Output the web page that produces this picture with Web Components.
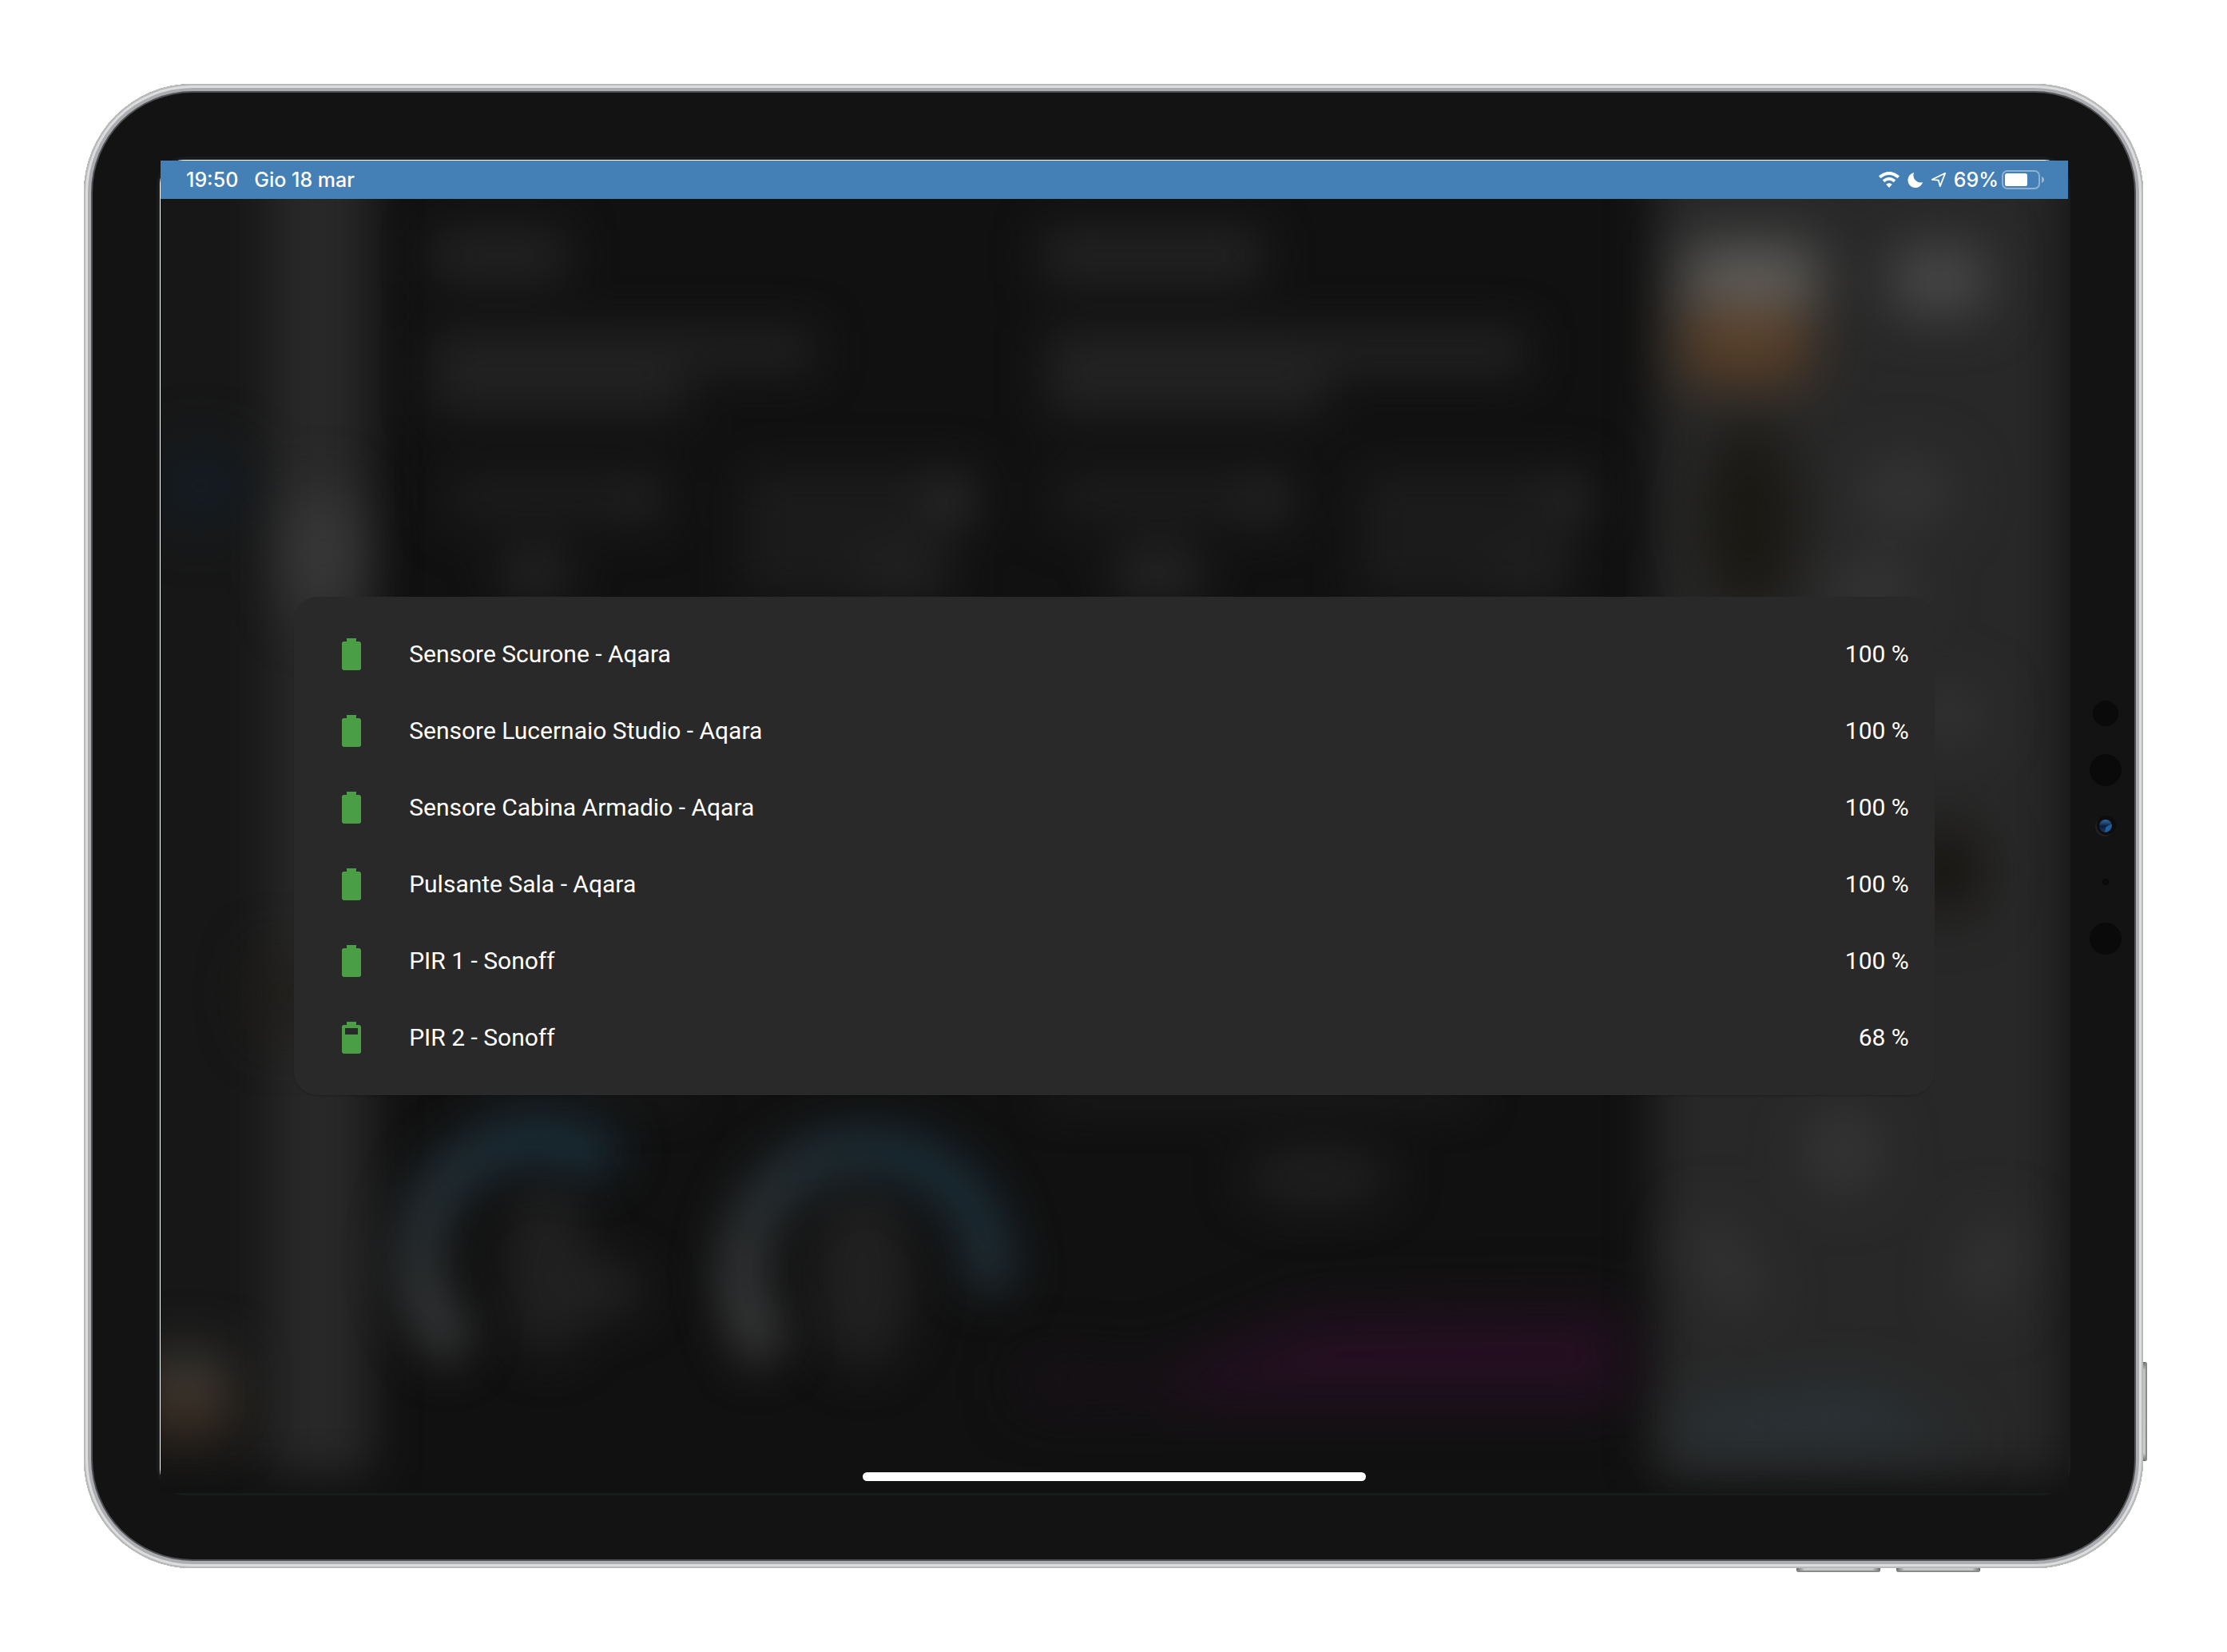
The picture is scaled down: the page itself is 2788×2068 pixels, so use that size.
<!DOCTYPE html>
<html lang="it">
<head>
<meta charset="utf-8">
<title>Batterie sensori</title>
<style>
  html, body { margin: 0; background: #fff; }
</style>
</head>
<body>
<tablet-frame>
  <status-bar slot="status" time="19:50" date="Gio 18 mar" charge="69"></status-bar>
  <dashboard-backdrop slot="backdrop"></dashboard-backdrop>
  <battery-card>
    <battery-row level="100">Sensore Scurone - Aqara</battery-row>
    <battery-row level="100">Sensore Lucernaio Studio - Aqara</battery-row>
    <battery-row level="100">Sensore Cabina Armadio - Aqara</battery-row>
    <battery-row level="100">Pulsante Sala - Aqara</battery-row>
    <battery-row level="100">PIR 1 - Sonoff</battery-row>
    <battery-row level="68">PIR 2 - Sonoff</battery-row>
  </battery-card>
</tablet-frame>

<template id="tablet-frame">
  <style>
    :host { display: flex; box-sizing: border-box; min-height: 100vh; padding: 105px; }
    .body {
      position: relative; flex: 1; display: flex; box-sizing: border-box; padding: 91px;
      border-radius: 136px; background: #131313;
      box-shadow: inset 0 0 0 2px #b9bab8, inset 0 0 0 5px #dcdddf, inset 0 0 0 9px #acadb1, inset 0 0 0 11px #505153;
    }
    .glass { flex: 1; display: flex; padding: 4px 3px 3px 4px; border-radius: 36px; background: #191c1c; }
    .edge { flex: 1; display: flex; padding: 1px 0 0 1px; border-radius: 30px; background: #fff; }
    .screen { flex: 1; display: flex; flex-direction: column; min-width: 0; background: #111; }
    .view { position: relative; flex: 1; display: flex; align-items: center; justify-content: center; }
    ::slotted([slot="backdrop"]) { position: absolute; inset: 0; }
    .home { position: absolute; bottom: 15px; left: 50%; width: 630px; height: 11px; margin-left: -315px; border-radius: 6px; background: #fff; }
    .sensors { position: absolute; right: 27px; top: 50%; margin-top: -161px; }
    .key {
      position: absolute; box-sizing: border-box; border: 0 solid #8a8b8b;
    }
    .key.power { left: 100%; bottom: 134px; width: 5px; height: 124px; border-right-width: 2px; border-radius: 0 2px 2px 0;
      background: linear-gradient(#6a6b6b, #bfc0c0 10px, #c9caca 114px, #6a6b6b); }
    .key.vol { top: 100%; width: 105px; height: 5px; border-bottom-width: 2px; border-radius: 0 0 2px 2px;
      background: linear-gradient(90deg, #6a6b6b, #c9caca 10px, #c9caca 95px, #6a6b6b); }
    .up { right: 329px; }
    .down { right: 204px; }
  </style>
  <div class="body">
    <div class="glass"><div class="edge"><main class="screen">
      <slot name="status"></slot>
      <div class="view">
        <slot name="backdrop"></slot>
        <slot></slot>
        <div class="home"></div>
      </div>
    </main></div></div>
    <svg class="sensors" width="40" height="322" viewBox="0 0 40 322" aria-hidden="true">
      <defs><linearGradient id="lens" x1="0" y1="0" x2="0" y2="1"><stop offset="0" stop-color="#2f6aa3"/><stop offset=".35" stop-color="#1b3a66"/><stop offset=".5" stop-color="#0e1c3a"/><stop offset="1" stop-color="#163a68"/></linearGradient></defs>
      <g fill="#0a0a0a"><circle cx="20" cy="20" r="16"/><circle cx="20" cy="91" r="20"/><circle cx="20" cy="231" r="4"/><circle cx="20" cy="302" r="20"/></g>
      <circle cx="19" cy="162" r="12" fill="#202020"/><circle cx="21" cy="160" r="12" fill="#0d0d0d"/>
      <circle cx="20" cy="161" r="8" fill="url(#lens)"/>
      <path d="M20 163q4-4 8-4q0 8-9 10z" fill="#1f5f9b"/>
    </svg>
    <div class="key power"></div><div class="key vol up"></div><div class="key vol down"></div>
  </div>
</template>

<template id="status-bar">
  <style>
    :host { display: flex; align-items: center; justify-content: space-between; height: 48px; padding: 0 29px 0 32px;
      background: #447fb5; color: #fff; font: 500 25px/32px Inter, "Liberation Sans", sans-serif; }
    .group { display: flex; align-items: center; }
    .left { gap: 20px; }
    .right { gap: 9px; }
    .charge { display: flex; align-items: center; gap: 4px; }
    svg { display: block; }
  </style>
  <div class="group left"><time id="time"></time><span id="date"></span></div>
  <div class="group right">
    <svg width="28" height="20" viewBox="0 0 28 20" role="img" aria-label="Wi-Fi">
      <path d="M2.2 6.8Q14-3 25.8 6.8" fill="none" stroke="#fff" stroke-width="4"/>
      <path d="M7 11.8Q14 5.8 21 11.8" fill="none" stroke="#fff" stroke-width="3.8"/>
      <path d="M10.2 15.8Q14 12.6 17.8 15.8L14 19.9z" fill="#fff"/>
    </svg>
    <svg width="20" height="20" viewBox="0 0 20 20" role="img" aria-label="Non disturbare"><path d="M8.2 1A9.6 9.6 0 1 0 19.2 13.1A9 9 0 0 1 8.2 1z" fill="#fff"/></svg>
    <svg width="20" height="20" viewBox="0 0 20 20" role="img" aria-label="Posizione"><path d="M18.2 1.8L1.8 9.8L9.8 10.6L11.8 18.2z" fill="none" stroke="#fff" stroke-width="1.8" stroke-linejoin="round"/></svg>
    <div class="charge">
      <span id="charge"></span>
      <svg width="54" height="24" viewBox="0 0 54 24" aria-hidden="true">
        <rect x="1" y="1" width="46" height="22" rx="6" fill="none" stroke="#fff" stroke-opacity=".4" stroke-width="2"/>
        <rect x="4" y="4" width="28" height="16" rx="2.5" fill="#fff"/>
        <path d="M50 8q3 1.2 3 4t-3 4z" fill="#fff" fill-opacity=".45"/>
      </svg>
    </div>
  </div>
</template>

<template id="battery-card">
  <style>
    :host { position: relative; display: block; box-sizing: border-box; width: 86%; padding: 24px 0; border-radius: 30px;
      background: #292929; color: #fff; font: 400 30px/40px Roboto, "Liberation Sans", sans-serif;
      box-shadow: 0 2px 3px -2px rgba(0, 0, 0, .5); }
  </style>
  <div role="list"><slot></slot></div>
</template>

<template id="battery-row">
  <style>
    :host { display: flex; align-items: center; gap: 48px; height: 96px; padding: 0 32px 0 48px; }
    svg { flex: none; fill: #4a9e45; }
    .name { flex: 1; }
  </style>
  <svg width="48" height="48" viewBox="0 0 24 24" aria-hidden="true"><path id="shape"/></svg>
  <span class="name"><slot></slot></span>
  <span id="state"></span>
</template>

<template id="dashboard-backdrop">
  <style>
    :host { display: block; overflow: hidden; background: #111; }
    svg { display: block; width: 100%; height: 100%; }
  </style>
  <svg viewBox="201 249 2388 1620" preserveAspectRatio="none" aria-hidden="true">
    <defs>
      <filter id="soft" filterUnits="userSpaceOnUse" x="0" y="0" width="2788" height="2068" color-interpolation-filters="sRGB"><feGaussianBlur stdDeviation="28"/></filter>
      <filter id="softer" filterUnits="userSpaceOnUse" x="0" y="0" width="2788" height="2068" color-interpolation-filters="sRGB"><feGaussianBlur stdDeviation="34"/></filter>
      <linearGradient id="g1" gradientUnits="userSpaceOnUse" x1="560" y1="1700" x2="690" y2="1440"><stop offset="0" stop-color="#3a3a3a"/><stop offset=".4" stop-color="#2b3134"/><stop offset="1" stop-color="#1a2f3a"/></linearGradient>
      <linearGradient id="g2" gradientUnits="userSpaceOnUse" x1="950" y1="1700" x2="1130" y2="1440"><stop offset="0" stop-color="#3d3d3d"/><stop offset=".4" stop-color="#2e3234"/><stop offset="1" stop-color="#1a2e38"/></linearGradient>
    </defs>
    <g filter="url(#soft)">
      <rect x="120" y="160" width="225" height="1690" fill="#171717"/>
      <rect x="339" y="160" width="126" height="1685" fill="#282828"/>
      <rect x="2072" y="140" width="512" height="1710" fill="#282828"/>
      <rect x="2575" y="140" width="120" height="1710" fill="#171717"/>
    </g>
    <g filter="url(#softer)">
      <ellipse cx="403" cy="692" rx="42" ry="85" fill="#3a3a3a"/>
      <ellipse cx="250" cy="608" rx="60" ry="50" fill="#141c23"/>
      <ellipse cx="350" cy="1245" rx="30" ry="55" fill="#1f1c17"/>
      <path d="M180 1695H285V1755H180z" fill="#3d3b37"/>
      <path d="M180 1745H285V1790H180z" fill="#463424"/>
    </g>
    <g filter="url(#soft)" fill="#222">
      <rect x="540" y="286" width="170" height="68"/>
      <rect x="1305" y="286" width="275" height="68" fill="#232323"/>
      <path d="M540 412H1020V465H860V520H540z" fill="#212121"/>
      <path d="M1310 412H1910V468H1660V520H1310z" fill="#222"/>
      <g fill="#1b1b1b">
        <rect x="560" y="585" width="270" height="75"/><rect x="930" y="585" width="290" height="75"/>
        <rect x="1320" y="585" width="300" height="75"/><rect x="1700" y="585" width="290" height="75"/>
        <rect x="930" y="660" width="260" height="90"/><rect x="1700" y="660" width="270" height="90"/>
      </g>
      <circle cx="805" cy="627" r="25"/><circle cx="1190" cy="627" r="32" fill="#292929"/><circle cx="1585" cy="627" r="30" fill="#242424"/><circle cx="1965" cy="627" r="28" fill="#272727"/>
      <ellipse cx="670" cy="718" rx="48" ry="35" fill="#232323"/><ellipse cx="1125" cy="718" rx="60" ry="30"/>
      <ellipse cx="1450" cy="718" rx="62" ry="36" fill="#242424"/><ellipse cx="1910" cy="718" rx="55" ry="30" fill="#202020"/>
      <rect x="600" y="1350" width="260" height="28" fill="#1b1b1b"/><rect x="1310" y="1340" width="530" height="38" fill="#1e1e1e"/>
      <ellipse cx="685" cy="1590" rx="55" ry="110" fill="#202020"/><ellipse cx="745" cy="1615" rx="65" ry="38" fill="#212121"/>
      <ellipse cx="1080" cy="1600" rx="65" ry="115" fill="#202020"/>
      <ellipse cx="1650" cy="1473" rx="95" ry="42" fill="#1e1e1e"/>
    </g>
    <g filter="url(#soft)" fill="none" stroke-width="58">
      <path d="M578 1690A149 149 0 0 1 765 1458" stroke="url(#g1)"/>
      <path d="M967 1695A155 155 0 1 1 1238 1615" stroke="url(#g2)"/>
    </g>
    <g filter="url(#softer)">
      <path d="M1280 1700L1450 1715L1640 1635L2030 1630V1758H1280z" fill="#181017"/>
      <path d="M1460 1730L1640 1660L2030 1655V1750H1460z" fill="#260f23"/>
      <path d="M2110 305H2275V390H2110z" fill="#5e5d5b"/>
      <path d="M2105 385H2265V480H2105z" fill="#583f28"/>
      <path d="M2370 310H2485V390H2370z" fill="#4b4b4b"/>
      <ellipse cx="2190" cy="650" rx="60" ry="120" fill="#191813"/>
      <ellipse cx="2385" cy="615" rx="65" ry="45" fill="#343434"/>
      <ellipse cx="2345" cy="740" rx="60" ry="40" fill="#353535"/>
      <ellipse cx="2440" cy="895" rx="45" ry="40" fill="#333"/>
      <ellipse cx="2435" cy="1090" rx="48" ry="52" fill="#15130f"/>
      <ellipse cx="2308" cy="1440" rx="45" ry="55" fill="#363636"/>
      <path d="M2130 1530L2190 1640" stroke="#333" stroke-width="64"/>
      <path d="M2505 1530L2475 1635" stroke="#333" stroke-width="64"/>
      <path d="M2100 1760L2330 1735L2470 1805L2100 1815z" fill="#2a3337"/>
    </g>
  </svg>
</template>

<script>
  const stamp = (el) => {
    const root = el.attachShadow({ mode: "open" });
    root.append(document.getElementById(el.localName).content.cloneNode(true));
    return root;
  };

  class TabletFrame extends HTMLElement {
    constructor() { super(); stamp(this); }
  }

  class StatusBar extends HTMLElement {
    constructor() { super(); stamp(this); }
    connectedCallback() {
      const find = (id) => this.shadowRoot.getElementById(id);
      find("time").textContent = this.getAttribute("time");
      find("date").textContent = this.getAttribute("date");
      find("charge").textContent = this.getAttribute("charge") + "%";
    }
  }

  class BatteryCard extends HTMLElement {
    constructor() { super(); stamp(this); }
  }

  const CASE = "M16.67 4H15V2H9V4H7.33A1.33 1.33 0 0 0 6 5.33V20.67C6 21.4 6.6 22 7.33 22H16.67A1.33 1.33 0 0 0 18 20.67V5.33C18 4.6 17.4 4 16.67 4";

  class BatteryRow extends HTMLElement {
    constructor() { super(); stamp(this); }
    connectedCallback() {
      const level = Number(this.getAttribute("level"));
      this.setAttribute("role", "listitem");
      // Below full charge the case shows an empty window above the filled part.
      const windowPath = level < 95 ? "M16 10H8V6H16" : "";
      const shape = this.shadowRoot.getElementById("shape");
      shape.setAttribute("d", windowPath + CASE);
      shape.setAttribute("fill-rule", "evenodd");
      this.shadowRoot.getElementById("state").textContent = level + " %";
    }
  }

  class DashboardBackdrop extends HTMLElement {
    constructor() { super(); stamp(this); }
  }

  customElements.define("tablet-frame", TabletFrame);
  customElements.define("status-bar", StatusBar);
  customElements.define("battery-card", BatteryCard);
  customElements.define("battery-row", BatteryRow);
  customElements.define("dashboard-backdrop", DashboardBackdrop);
</script>
</body>
</html>
